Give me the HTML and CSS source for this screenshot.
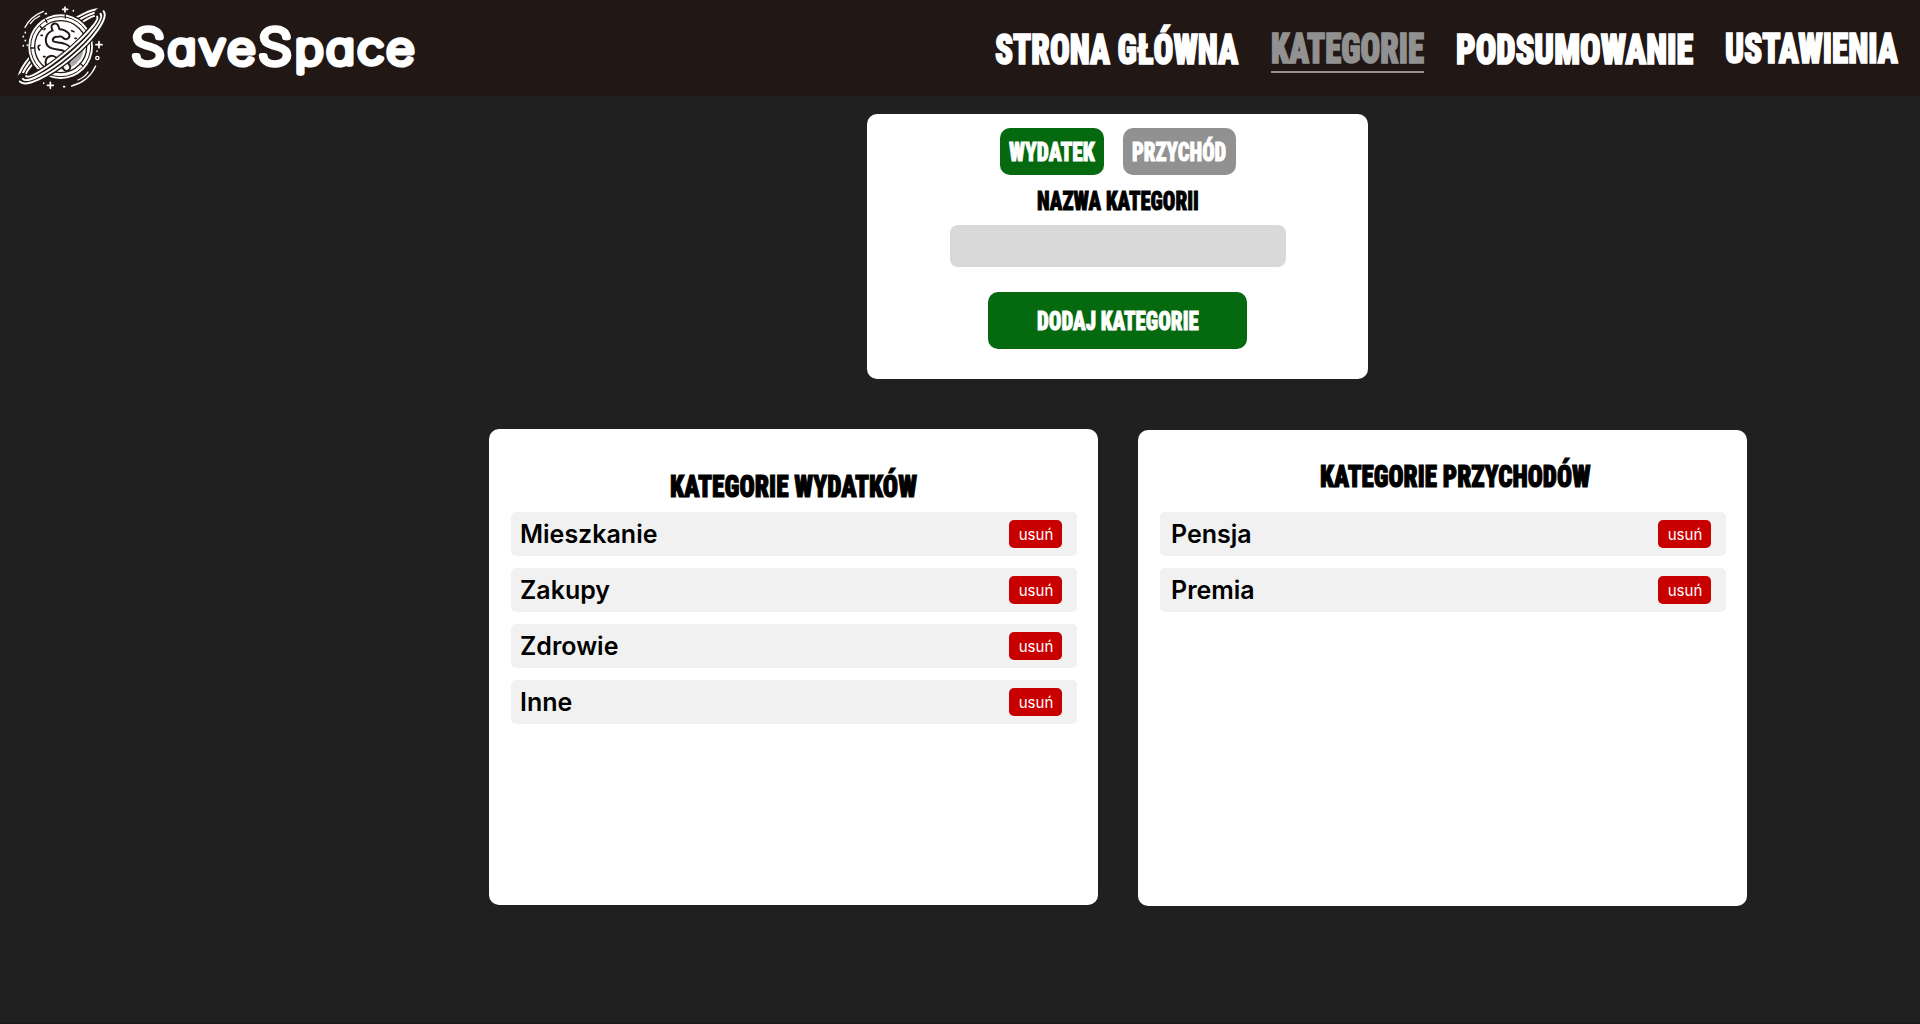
FILE: index.html
```html
<!DOCTYPE html>
<html lang="pl">
<head>
<meta charset="utf-8">
<title>SaveSpace</title>
<link rel="stylesheet" href="styles.css">
</head>
<body>
<header class="header">
  <a class="brand">
    <svg class="planet" viewBox="0 0 360 288" width="120" height="96" fill="none" stroke-linecap="round">
      <g transform="translate(185 139) rotate(-40)" stroke="#fff" stroke-width="6">
        <ellipse rx="164" ry="45"/><ellipse rx="152" ry="34"/><ellipse rx="139" ry="22"/>
      </g>
      <circle cx="182" cy="140" r="102" fill="#211816"/>
      <circle cx="182" cy="140" r="97" fill="#fff"/>
      <circle cx="182" cy="140" r="90" stroke="#211816" stroke-width="3"/>
      <circle cx="182" cy="140" r="78" stroke="#211816" stroke-width="4"/>
      <path d="M150 202A72 72 0 0 0 252 126L238 118L140 190Z" fill="#aaa"/>
      <path d="M120 78l7 9M240 190l9 8M92 144h10M196 45v9M136 58l5 9" stroke="#211816" stroke-width="4"/>
      <path d="M198 107C184 91 149 98 148 119C147 141 172 135 190 141C216 149 206 178 189 186M165 81l7 19M190 186l10 16M148 193C143 174 161 174 166 188" stroke="#211816" stroke-width="27"/>
      <path d="M198 107C184 91 149 98 148 119C147 141 172 135 190 141C216 149 206 178 189 186M165 81l7 19M190 186l10 16M148 193C143 174 161 174 166 188" stroke="#fff" stroke-width="15"/>
      <path d="M118 150q-8-14 2-14M123 106h4M132 89l3-3M215 92l7 3M225 115h4M131 170h4" stroke="#211816" stroke-width="5"/>
      <g transform="translate(185 139) rotate(-40)">
        <path d="M-152 0A152 34 0 0 0 152 0" stroke="#211816" stroke-width="36"/>
        <g stroke="#fff" stroke-width="6">
          <path d="M-164 0A164 45 0 0 0 164 0"/><path d="M-152 0A152 34 0 0 0 152 0"/><path d="M-139 0A139 22 0 0 0 139 0"/>
        </g>
      </g>
      <g stroke="#fff" stroke-width="4">
        <path d="M75 82Q91 50 130 34M91 71Q102 56 119 48M215 258Q267 244 287 198M234 240Q255 231 264 216"/>
        <path d="M195 21v15M188 28h15M297 125v18M288 134h18M151 247v18M142 256h18" stroke-width="5"/>
        <circle cx="292" cy="174" r="5"/>
        <path d="M70 109v1M76 121v1M70 137v1M82 135v1M220 32v1M136 41h3M131 249v1M191 260h3M291 153v1M76 97v1" stroke-width="5"/>
      </g>
    </svg>
    <svg class="wordmark" width="282" height="42"><text transform="scale(1.12 1)" x="-1" y="38.5">S<tspan class="small">ave</tspan>S<tspan class="small">pace</tspan></text></svg>
  </a>
  <nav class="nav">
    <a class="nav-link low"><svg class="display" width="244" height="31"><text y="30.2" transform="scale(.783 1)">STRONA GŁÓWNA</text></svg></a>
    <a class="nav-link active"><svg class="display" width="153" height="31"><text y="30.2" transform="scale(.779 1)">KATEGORIE</text></svg></a>
    <a class="nav-link low"><svg class="display" width="237" height="31"><text y="30.2" transform="scale(.815 1)">PODSUMOWANIE</text></svg></a>
    <a class="nav-link"><svg class="display" width="173" height="31"><text y="30.2" transform="scale(.788 1)">USTAWIENIA</text></svg></a>
  </nav>
</header>

<main class="content">
  <form class="card form">
    <div class="types">
      <button type="button" class="button type expense"><svg class="display label" width="86" height="19"><text y="18.4" transform="scale(.827 1)">WYDATEK</text></svg></button>
      <button type="button" class="button type income"><svg class="display label" width="94" height="19"><text y="18.4" transform="scale(.795 1)">PRZYCHÓD</text></svg></button>
    </div>
    <label class="field-label" for="name"><svg class="display label" width="162" height="19"><text y="18.4" transform="scale(.8 1)">NAZWA KATEGORII</text></svg></label>
    <input class="field" id="name" type="text">
    <button type="button" class="button submit"><svg class="display label" width="162" height="19"><text y="18.4" transform="scale(.806 1)">DODAJ KATEGORIE</text></svg></button>
  </form>

  <div class="panels">
    <section class="card panel expenses">
      <h2 class="title"><svg class="display heading" width="248" height="24"><text y="22.3" transform="scale(.792 1)">KATEGORIE WYDATKÓW</text></svg></h2>
      <ul class="list">
        <li class="row">Mieszkanie<button class="remove">usuń</button></li>
        <li class="row">Zakupy<button class="remove">usuń</button></li>
        <li class="row">Zdrowie<button class="remove">usuń</button></li>
        <li class="row">Inne<button class="remove">usuń</button></li>
      </ul>
    </section>
    <section class="card panel incomes">
      <h2 class="title"><svg class="display heading" width="271" height="24"><text y="22.3" transform="scale(.782 1)">KATEGORIE PRZYCHODÓW</text></svg></h2>
      <ul class="list">
        <li class="row">Pensja<button class="remove">usuń</button></li>
        <li class="row">Premia<button class="remove">usuń</button></li>
      </ul>
    </section>
  </div>
</main>
<footer class="footer"></footer>
</body>
</html>
```
FILE: styles.css
```css
* { box-sizing: border-box; }

body {
  margin: 0;
  height: 1024px;
  display: flex;
  flex-direction: column;
  overflow: hidden;
  background: #202020;
  color: #000;
  font-family: Inter, "Liberation Sans", sans-serif;
}

/* Header */
.header {
  height: 96px;
  flex: none;
  display: flex;
  justify-content: space-between;
  background: #211816;
  color: #fff;
}
.brand { display: flex; }
.planet { display: block; }
.wordmark {
  display: block;
  margin: 25px 0 0 12px;
  overflow: visible;
  font: 200 49px Inter, sans-serif;
  font-feature-settings: "cv11";
  letter-spacing: 2.5px;
  fill: #fff;
  stroke: #fff;
  stroke-width: 5.5px;
  stroke-linejoin: round;
  stroke-linecap: round;
}
.small { font-size: 43px; }

.nav {
  display: flex;
  align-items: flex-start;
  gap: 32px;
  padding: 33px 22px 0 0;
}
.nav-link { height: 40px; }
.nav-link.low { padding-top: 1px; }
.nav-link.active {
  color: #919191;
  border-bottom: 2px solid #919191;
}

/* Heavy condensed lettering */
.display {
  display: block;
  overflow: visible;
  font: 900 42px "Roboto Condensed", Roboto, sans-serif;
  font-stretch: 75%;
  fill: currentColor;
  stroke: currentColor;
  stroke-width: 1.7px;
}
.label { font-size: 26px; stroke-width: .9px; }
.heading { font-size: 32px; stroke-width: 1.2px; }

.content { flex: 1; }
.card { background: #fff; border-radius: 10px; }

/* New category form */
.form {
  width: 501px;
  height: 265px;
  margin: 18px 0 0 867px;
  padding-top: 14px;
  display: flex;
  flex-direction: column;
  align-items: center;
}
.types { display: flex; gap: 19px; }
.button {
  display: flex;
  align-items: center;
  justify-content: center;
  padding: 0;
  border: 0;
  border-radius: 10px;
  color: #fff;
}
.type { height: 47px; padding-top: 2px; }
.expense { width: 104px; background: #056910; }
.income { width: 113px; background: #919191; }
.field-label { margin-top: 17px; }
.field {
  width: 336px;
  height: 42px;
  margin-top: 14px;
  border: 0;
  border-radius: 8px;
  background: #d9d9d9;
}
.submit {
  width: 259px;
  height: 57px;
  margin-top: 25px;
  padding-top: 2px;
  background: #056910;
}

/* Category panels */
.panels {
  display: flex;
  align-items: flex-start;
  gap: 40px;
  padding: 50px 0 0 489px;
}
.panel { width: 609px; height: 476px; }
.expenses { padding: 46px 21px 0 22px; }
.incomes { margin-top: 1px; padding: 35px 21px 0 22px; }
.title { height: 24px; margin: 0; display: flex; justify-content: center; }
.incomes .title { padding-left: 24px; }
.list {
  margin: 13px 0 0;
  padding: 0;
  display: grid;
  gap: 12px;
  list-style: none;
}
.incomes .list { margin-top: 23px; }
.row {
  height: 44px;
  display: flex;
  align-items: center;
  justify-content: space-between;
  padding: 0 15px 0 9px;
  border-radius: 5px;
  background: #f1f1f1;
  font-size: 25px;
  font-weight: 600;
}
.incomes .row { padding-left: 11px; }
.remove {
  width: 53px;
  height: 28px;
  padding: 0 0 0 1px;
  border: 0;
  border-radius: 5px;
  background: #c80000;
  color: #fff;
  font: 400 15px Inter, sans-serif;
}

.footer { height: 1px; flex: none; background: #211816; }
```
